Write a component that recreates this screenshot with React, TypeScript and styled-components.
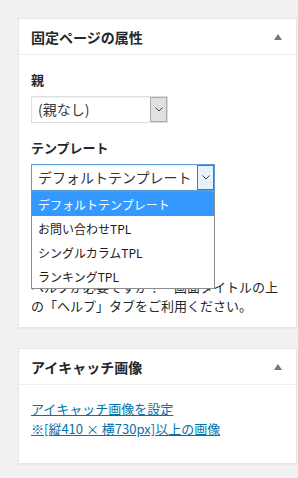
import React from "react";
import styled, { createGlobalStyle } from "styled-components";

const GlobalStyle = createGlobalStyle`
  html, body { margin: 0; padding: 0; background: #f1f1f1; }
  body {
    font-family: "Noto Sans CJK JP", "Noto Sans", sans-serif;
    color: #23282d;
    font-size: 13px;
  }
  * { box-sizing: border-box; }
`;

const Page = styled.div`
  padding: 18px 0 20px 18px;
  display: flex;
  flex-direction: column;
  gap: 20px;
`;

const Postbox = styled.section`
  width: 279px;
  background: #fff;
  border: 1px solid #e5e5e5;
  box-shadow: 0 1px 1px rgba(0, 0, 0, 0.04);
`;

const BoxHeader = styled.div`
  height: 36px;
  border-bottom: 1px solid #eee;
  display: flex;
  align-items: center;
  justify-content: space-between;
  padding-left: 12px;
`;

const BoxTitle = styled.h2`
  margin: 0;
  font-size: 14px;
  font-weight: 700;
  line-height: 20px;
  color: #23282d;
`;

const Toggle = styled.span`
  width: 36px;
  height: 35px;
  display: flex;
  align-items: center;
  justify-content: center;
`;

const BoxBody = styled.div<{ $pad: string }>`
  padding: ${(p) => p.$pad};
`;

const FieldLabel = styled.div`
  margin: 16px 0 7px;
  line-height: 18px;
  font-size: 13px;
  font-weight: 700;
`;

const SelectBox = styled.div<{ $width: number; $focus?: boolean }>`
  position: relative;
  width: ${(p) => p.$width}px;
  height: 27px;
  display: flex;
  background: #fff;
  border: 1px solid ${(p) => (p.$focus ? "#5b9dd9" : "#ddd")};
  box-shadow: inset 0 1px 2px rgba(0, 0, 0, 0.07);
`;

const SelectValue = styled.span`
  flex: 1;
  padding-left: 6px;
  font-size: 14px;
  line-height: 25px;
  white-space: nowrap;
  overflow: hidden;
  color: #32373c;
`;

const SelectArrow = styled.span<{ $focus?: boolean }>`
  width: 17px;
  height: 100%;
  display: flex;
  align-items: center;
  justify-content: center;
  border: 1px solid ${(p) => (p.$focus ? "#3c7fb1" : "#adadad")};
  background: ${(p) => (p.$focus ? "#e5f1fb" : "#e1e1e1")};
`;

const OptionList = styled.ul`
  position: absolute;
  top: calc(100% + 1px);
  left: -1px;
  right: -1px;
  margin: 0;
  padding: 0;
  list-style: none;
  background: #fff;
  border: 1px solid #8c8c8c;
  z-index: 2;
`;

const OptionItem = styled.li<{ $active?: boolean }>`
  height: 24px;
  display: flex;
  align-items: center;
  padding-left: 6px;
  font-size: 12px;
  white-space: nowrap;
  color: ${(p) => (p.$active ? "#fff" : "#1a1a1a")};
  background: ${(p) => (p.$active ? "#3399ff" : "#fff")};
`;

const HelpText = styled.p`
  margin: 87px 0 0;
  line-height: 18.5px;
  font-size: 13px;
`;

const ThumbLink = styled.a`
  display: block;
  color: #0073aa;
  text-decoration: underline;
  line-height: 20px;
  font-size: 13px;
`;

const Chevron = () => (
  <svg width="8" height="5" viewBox="0 0 8 5">
    <polyline points="0.5,0.5 4,4 7.5,0.5" fill="none" stroke="#444" strokeWidth="1" />
  </svg>
);

const Triangle = () => (
  <svg width="8" height="6" viewBox="0 0 8 6">
    <polygon points="0,6 4,0 8,6" fill="#72777c" />
  </svg>
);

const Header = ({ title }: { title: string }) => (
  <BoxHeader>
    <BoxTitle>{title}</BoxTitle>
    <Toggle>
      <Triangle />
    </Toggle>
  </BoxHeader>
);

const templates = ["デフォルトテンプレート", "お問い合わせTPL", "シングルカラムTPL", "ランキングTPL"];

export default function App() {
  return (
    <>
      <GlobalStyle />
      <Page>
        <Postbox>
          <Header title="固定ページの属性" />
          <BoxBody $pad="0 12px 12px">
            <FieldLabel>親</FieldLabel>
            <SelectBox $width={137}>
              <SelectValue>(親なし)</SelectValue>
              <SelectArrow>
                <Chevron />
              </SelectArrow>
            </SelectBox>
            <FieldLabel>テンプレート</FieldLabel>
            <SelectBox $width={184} $focus>
              <SelectValue>デフォルトテンプレート</SelectValue>
              <SelectArrow $focus>
                <Chevron />
              </SelectArrow>
              <OptionList>
                {templates.map((t, i) => (
                  <OptionItem key={t} $active={i === 0}>
                    {t}
                  </OptionItem>
                ))}
              </OptionList>
            </SelectBox>
            <HelpText>
              ヘルプが必要ですか？　画面タイトルの上
              <br />
              の「ヘルプ」タブをご利用ください。
            </HelpText>
          </BoxBody>
        </Postbox>
        <Postbox>
          <Header title="アイキャッチ画像" />
          <BoxBody $pad="14px 12px 24px">
            <ThumbLink href="#">
              アイキャッチ画像を設定
              <br />
              ※[縦410 × 横730px]以上の画像
            </ThumbLink>
          </BoxBody>
        </Postbox>
      </Page>
    </>
  );
}
